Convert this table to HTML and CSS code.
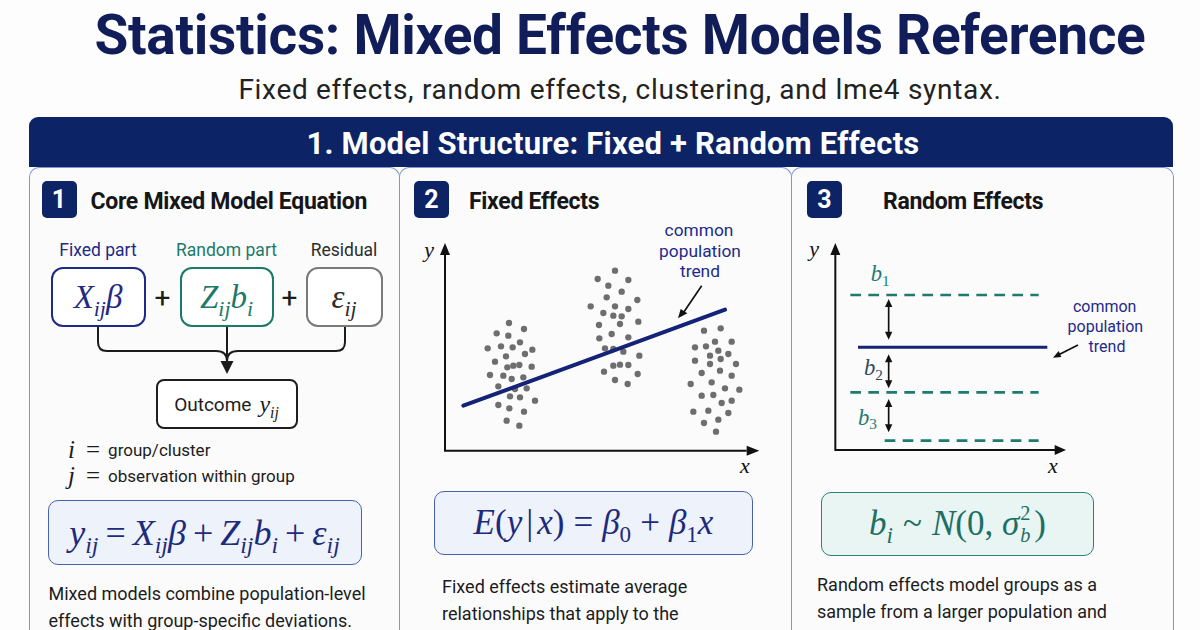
FILE: index.html
```html
<!DOCTYPE html>
<html lang="en">
<head>
<meta charset="utf-8">
<title>Statistics: Mixed Effects Models Reference</title>
<link rel="stylesheet" href="styles.css">
</head>
<body>
<header class="page-head">
  <h1 class="page-title">Statistics: Mixed Effects Models Reference</h1>
  <p class="page-sub">Fixed effects, random effects, clustering, and lme4 syntax.</p>
</header>

<section class="section">
  <div class="section-head">1. Model Structure: Fixed + Random Effects</div>
  <div class="panels">

    <!-- Panel 1 -->
    <div class="panel p1">
      <div class="panel-title"><span class="badge">1</span><span class="ptext">Core Mixed Model Equation</span></div>
      <div class="parts labels">
        <span class="lab lab-fixed">Fixed part</span>
        <span></span>
        <span class="lab lab-random">Random part</span>
        <span></span>
        <span class="lab lab-resid">Residual</span>
      </div>
      <div class="parts boxes">
        <div class="pbox pbox-fixed"><span class="m">X<sub>ij</sub>β</span></div>
        <span class="plus">+</span>
        <div class="pbox pbox-random"><span class="m">Z<sub>ij</sub>b<sub>i</sub></span></div>
        <span class="plus">+</span>
        <div class="pbox pbox-resid"><span class="m">ε<sub>ij</sub></span></div>
      </div>
      <svg class="connect" width="368" height="52" viewBox="0 0 368 52">
        <path d="M68 0 V15 Q68 24 77 24 H186 Q197 24 197 34" fill="none" stroke="#1b1b1b" stroke-width="2"/>
        <path d="M315 0 V15 Q315 24 306 24 H208 Q197 24 197 34" fill="none" stroke="#1b1b1b" stroke-width="2"/>
        <path d="M197 0 V38" fill="none" stroke="#1b1b1b" stroke-width="2"/>
        <polygon points="190.5,34 203.5,34 197,47" fill="#1b1b1b"/>
      </svg>
      <div class="outcome">Outcome <span class="m">y<sub>ij</sub></span></div>
      <div class="defs">
        <div class="def"><span class="m dvar">i</span><span class="eq">=</span>group/cluster</div>
        <div class="def"><span class="m dvar">j</span><span class="eq">=</span>observation within group</div>
      </div>
      <div class="eqbox eq-navy eq1">
        <span class="m">y<sub>ij</sub></span><span class="op">=</span><span class="m">X<sub>ij</sub>β</span><span class="op">+</span><span class="m">Z<sub>ij</sub>b<sub>i</sub></span><span class="op">+</span><span class="m">ε<sub>ij</sub></span>
      </div>
      <p class="note note1">Mixed models combine population-level effects with group-specific deviations.</p>
    </div>

    <!-- Panel 2 -->
    <div class="panel p2">
      <div class="panel-title"><span class="badge">2</span><span class="ptext">Fixed Effects</span></div>
      <svg class="chart" width="380" height="270" viewBox="0 0 1140 810">
        <g fill="#6e6e6e">
          <circle cx="327" cy="312" r="9.5"/><circle cx="290" cy="343" r="9.5"/><circle cx="325" cy="350" r="9.5"/><circle cx="372" cy="330" r="9.5"/>
          <circle cx="263" cy="388" r="9.5"/><circle cx="303" cy="382" r="9.5"/><circle cx="338" cy="385" r="9.5"/><circle cx="360" cy="370" r="9.5"/>
          <circle cx="397" cy="392" r="9.5"/><circle cx="375" cy="405" r="9.5"/><circle cx="285" cy="428" r="9.5"/><circle cx="318" cy="412" r="9.5"/>
          <circle cx="340" cy="440" r="9.5"/><circle cx="358" cy="438" r="9.5"/><circle cx="395" cy="443" r="9.5"/><circle cx="270" cy="468" r="9.5"/>
          <circle cx="310" cy="470" r="9.5"/><circle cx="335" cy="480" r="9.5"/><circle cx="370" cy="475" r="9.5"/><circle cx="295" cy="502" r="9.5"/>
          <circle cx="345" cy="510" r="9.5"/><circle cx="380" cy="508" r="9.5"/><circle cx="330" cy="532" r="9.5"/><circle cx="360" cy="535" r="9.5"/>
          <circle cx="295" cy="558" r="9.5"/><circle cx="328" cy="568" r="9.5"/><circle cx="372" cy="578" r="9.5"/><circle cx="405" cy="545" r="9.5"/>
          <circle cx="320" cy="605" r="9.5"/><circle cx="358" cy="620" r="9.5"/><circle cx="322" cy="445" r="9.5"/>

          <circle cx="645" cy="155" r="9.5"/><circle cx="593" cy="180" r="9.5"/><circle cx="685" cy="183" r="9.5"/><circle cx="625" cy="200" r="9.5"/>
          <circle cx="665" cy="218" r="9.5"/><circle cx="620" cy="235" r="9.5"/><circle cx="712" cy="243" r="9.5"/><circle cx="572" cy="262" r="9.5"/>
          <circle cx="645" cy="262" r="9.5"/><circle cx="685" cy="270" r="9.5"/><circle cx="610" cy="282" r="9.5"/><circle cx="640" cy="290" r="9.5"/>
          <circle cx="665" cy="292" r="9.5"/><circle cx="597" cy="318" r="9.5"/><circle cx="660" cy="315" r="9.5"/><circle cx="715" cy="308" r="9.5"/>
          <circle cx="598" cy="358" r="9.5"/><circle cx="635" cy="345" r="9.5"/><circle cx="685" cy="355" r="9.5"/><circle cx="615" cy="388" r="9.5"/>
          <circle cx="640" cy="390" r="9.5"/><circle cx="670" cy="398" r="9.5"/><circle cx="718" cy="410" r="9.5"/><circle cx="640" cy="440" r="9.5"/>
          <circle cx="660" cy="437" r="9.5"/><circle cx="685" cy="438" r="9.5"/><circle cx="612" cy="458" r="9.5"/><circle cx="713" cy="465" r="9.5"/>
          <circle cx="645" cy="483" r="9.5"/><circle cx="683" cy="495" r="9.5"/>

          <circle cx="912" cy="335" r="9.5"/><circle cx="962" cy="328" r="9.5"/><circle cx="945" cy="368" r="9.5"/><circle cx="995" cy="368" r="9.5"/>
          <circle cx="885" cy="385" r="9.5"/><circle cx="918" cy="382" r="9.5"/><circle cx="955" cy="395" r="9.5"/><circle cx="985" cy="405" r="9.5"/>
          <circle cx="885" cy="425" r="9.5"/><circle cx="930" cy="410" r="9.5"/><circle cx="930" cy="435" r="9.5"/><circle cx="962" cy="420" r="9.5"/>
          <circle cx="1008" cy="435" r="9.5"/><circle cx="905" cy="462" r="9.5"/><circle cx="960" cy="455" r="9.5"/><circle cx="995" cy="470" r="9.5"/>
          <circle cx="872" cy="495" r="9.5"/><circle cx="935" cy="490" r="9.5"/><circle cx="975" cy="508" r="9.5"/><circle cx="1018" cy="512" r="9.5"/>
          <circle cx="905" cy="530" r="9.5"/><circle cx="940" cy="528" r="9.5"/><circle cx="995" cy="545" r="9.5"/><circle cx="965" cy="552" r="9.5"/>
          <circle cx="880" cy="578" r="9.5"/><circle cx="925" cy="575" r="9.5"/><circle cx="985" cy="582" r="9.5"/><circle cx="912" cy="612" r="9.5"/>
          <circle cx="955" cy="602" r="9.5"/><circle cx="948" cy="638" r="9.5"/>
        </g>
        <line x1="190" y1="560" x2="975" y2="272" stroke="#142277" stroke-width="12" stroke-linecap="round"/>
        <path d="M135 105 V695 H1040" fill="none" stroke="#111" stroke-width="6"/>
        <polygon points="120,108 150,108 135,72" fill="#111"/>
        <polygon points="1040,680 1040,710 1078,695" fill="#111"/>
        <text x="73" y="115" class="axl">y</text>
        <text x="1020" y="762" class="axl">x</text>
        <text class="cpt cpt2" x="897" y="52">common</text>
        <text class="cpt cpt2" x="900" y="114">population</text>
        <text class="cpt cpt2" x="900" y="174">trend</text>
        <line x1="905" y1="200" x2="848" y2="284" stroke="#111" stroke-width="5"/>
        <polygon points="834,298 842,270 862,283" fill="#111"/>
      </svg>
      <div class="eqbox eq-navy eq2">
        <span class="m">E</span><span class="up">(</span><span class="m">y</span><span class="up bar">|</span><span class="m">x</span><span class="up">)</span><span class="op">=</span><span class="m">β<sub class="up">0</sub></span><span class="op">+</span><span class="m">β<sub class="up">1</sub>x</span>
      </div>
      <p class="note note2">Fixed effects estimate average relationships that apply to the whole population.</p>
    </div>

    <!-- Panel 3 -->
    <div class="panel p3">
      <div class="panel-title"><span class="badge">3</span><span class="ptext">Random Effects</span></div>
      <svg class="chart" width="380" height="270" viewBox="0 0 1140 810">
        <path d="M130 105 V693 H790" fill="none" stroke="#111" stroke-width="6"/>
        <polygon points="115,108 145,108 130,72" fill="#111"/>
        <polygon points="788,678 788,708 822,693" fill="#111"/>
        <text x="52" y="112" class="axl">y</text>
        <text x="768" y="762" class="axl">x</text>
        <g stroke="#1f7a70" stroke-width="8" stroke-dasharray="32 22" fill="none">
          <line x1="175" y1="228" x2="740" y2="228"/>
          <line x1="175" y1="520" x2="740" y2="520"/>
          <line x1="278" y1="665" x2="740" y2="665"/>
        </g>
        <line x1="198" y1="385" x2="766" y2="385" stroke="#142277" stroke-width="9"/>
        <g stroke="#111" stroke-width="5">
          <line x1="290" y1="262" x2="290" y2="340"/>
          <line x1="290" y1="428" x2="290" y2="486"/>
          <line x1="290" y1="562" x2="290" y2="618"/>
        </g>
        <g fill="#111">
          <polygon points="279,264 301,264 290,240"/><polygon points="279,338 301,338 290,362"/>
          <polygon points="279,430 301,430 290,406"/><polygon points="279,484 301,484 290,508"/>
          <polygon points="279,564 301,564 290,540"/><polygon points="279,616 301,616 290,640"/>
        </g>
        <text class="bl bl-t" x="236" y="186">b<tspan class="bs" dy="14">1</tspan></text>
        <text class="bl bl-d" x="216" y="468">b<tspan class="bs" dy="14">2</tspan></text>
        <text class="bl bl-t" x="198" y="617">b<tspan class="bs" dy="14">3</tspan></text>
        <text class="cpt" x="938" y="278">common</text>
        <text class="cpt" x="940" y="340">population</text>
        <text class="cpt" x="945" y="400">trend</text>
        <line x1="858" y1="378" x2="800" y2="407" stroke="#111" stroke-width="5"/>
        <polygon points="783,416 800,396 808,414" fill="#111"/>
      </svg>
      <div class="eqbox eq-teal eq3">
        <span class="m">b<sub>i</sub></span><span class="op">~</span><span class="m">N</span><span class="up">(0,&nbsp;</span><span class="m sig">σ<span class="supsub"><span class="up">2</span><span>b</span></span></span><span class="up">)</span>
      </div>
      <p class="note note3">Random effects model groups as a sample from a larger population and capture cluster variation.</p>
    </div>

  </div>
</section>
</body>
</html>
```

FILE: styles.css
```css
* { box-sizing: border-box; }

html, body {
  margin: 0;
  padding: 0;
}

body {
  width: 1200px;
  height: 630px;
  overflow: hidden;
  background: #fdfdfd;
  font-family: Roboto, "Liberation Sans", sans-serif;
  color: #1c1c1c;
}

/* ---------- page header ---------- */
.page-head {
  text-align: center;
  padding: 3px 0 0 40px;
}

.page-title {
  margin: 0;
  font-size: 55px;
  line-height: 64px;
  font-weight: 700;
  color: #111d58;
  letter-spacing: -0.3px;
}

.page-sub {
  margin: 7px 0 0;
  font-size: 28px;
  line-height: 32px;
  letter-spacing: 0.7px;
  color: #222;
}

/* ---------- section ---------- */
.section {
  margin: 11px 27px 0 29px;
}

.section-head {
  height: 50px;
  background: #0c2466;
  border-radius: 9px 9px 0 0;
  color: #fff;
  font-size: 31px;
  font-weight: 700;
  letter-spacing: 0.2px;
  display: flex;
  align-items: center;
  justify-content: center;
  padding: 2px 0 0 24px;
}

.panels {
  display: grid;
  grid-template-columns: 371px 392px 382px;
  height: 470px;
}

.panel {
  border: 1.5px solid #7d96cf;
  border-bottom: none;
  border-radius: 10px 10px 0 0;
  background: #fbfbfc;
  min-width: 0;
}

.p2, .p3 { margin-left: -1.5px; }

.panel-title {
  display: flex;
  align-items: center;
  height: 38px;
  margin-top: 12px;
}

.badge {
  width: 35px;
  height: 37px;
  border-radius: 5px;
  background: #0c2466;
  color: #fff;
  font-size: 25px;
  font-weight: 700;
  display: flex;
  align-items: center;
  justify-content: center;
}

.ptext {
  font-size: 23px;
  font-weight: 700;
  color: #161616;
  letter-spacing: -0.3px;
  padding-top: 4px;
}

.p1 .panel-title { padding-left: 11.5px; gap: 14px; }
.p2 .panel-title { padding-left: 14.5px; gap: 20px; }
.p3 .panel-title { padding-left: 15.5px; gap: 41px; }

/* ---------- math ---------- */
.m {
  font-family: "Liberation Serif", "DejaVu Serif", serif;
  font-style: italic;
}

.m sub, .m sup {
  font-size: 0.66em;
  line-height: 0;
}

.up {
  font-family: "Liberation Serif", "DejaVu Serif", serif;
  font-style: normal;
}

/* ---------- panel 1 ---------- */
.parts {
  display: grid;
  grid-template-columns: 95px 34px 94px 32px 77px;
  padding-left: 20.5px;
}

.labels {
  margin-top: 22px;
  height: 20px;
  font-size: 17.5px;
  line-height: 20px;
}

.lab {
  text-align: center;
  white-space: nowrap;
  display: flex;
  justify-content: center;
}

.lab-fixed { color: #1e2a86; }
.lab-random { color: #1b7a6a; }
.lab-resid { color: #2c2c2c; }

.boxes {
  margin-top: 7px;
  height: 60px;
}

.pbox {
  height: 60px;
  border: 2px solid;
  border-radius: 12px;
  display: flex;
  align-items: center;
  justify-content: center;
  background: #fff;
  font-size: 33px;
}

.pbox-fixed { border-color: #1e2a86; color: #1e2a86; }
.pbox-random { border-color: #1b7a6a; color: #1b7a6a; }
.pbox-resid { border-color: #7a7a7a; color: #2c2c2c; }

.plus {
  display: flex;
  align-items: center;
  justify-content: center;
  font-size: 28px;
  color: #1c1c1c;
}

.connect {
  display: block;
}

.outcome {
  margin-left: 125.5px;
  width: 142px;
  height: 50px;
  border: 2px solid #1e1e1e;
  border-radius: 8px;
  background: #fff;
  display: flex;
  align-items: center;
  justify-content: center;
  gap: 8px;
  font-size: 19px;
}

.outcome .m { font-size: 24px; }

.defs {
  margin-top: 8px;
  padding-left: 38px;
}

.def {
  height: 26px;
  display: flex;
  align-items: center;
  font-size: 17px;
}

.dvar {
  font-size: 25px;
  width: 12px;
}

.eq {
  font-family: "Liberation Serif", serif;
  font-size: 25px;
  margin: 0 8px 0 6px;
}

.eqbox {
  display: flex;
  align-items: center;
  justify-content: center;
  border-radius: 10px;
  border: 1.5px solid;
  white-space: nowrap;
}

.eq-navy {
  background: #eef2fb;
  border-color: #4763b0;
  color: #1e2a7c;
}

.eq-teal {
  background: #e9f5f3;
  border-color: #2f7f7a;
  color: #1c6f66;
}

.op {
  font-family: "Liberation Serif", serif;
  margin: 0 8px;
}

.eq1 {
  margin: 11px 0 0 17.5px;
  width: 314px;
  height: 65px;
  font-size: 36px;
}

.eq1 .op { margin: 0 7px; }

.note {
  margin: 0;
  font-size: 18px;
  line-height: 27px;
  color: #1c1c1c;
}

.note1 { margin: 14.5px 0 0 18.5px; width: 340px; }

/* ---------- charts ---------- */
.chart {
  display: block;
  margin-top: 1px;
}

.axl {
  font-family: "Liberation Serif", serif;
  font-style: italic;
  font-size: 66px;
  fill: #111;
}

.cpt {
  font-family: Roboto, "Liberation Sans", sans-serif;
  font-size: 48px;
  fill: #1e2a8a;
  text-anchor: middle;
}

.cpt2 { font-size: 52px; }

.bl {
  font-family: "Liberation Serif", serif;
  font-style: italic;
  font-size: 68px;
}

.bs { font-size: 46px; font-style: normal; }
.bl-t { fill: #1f7a70; }
.bl-d { fill: #2f4b5e; }

/* ---------- panel 2 ---------- */
.eq2 {
  margin: 2px 0 0 34.5px;
  width: 319px;
  height: 64px;
  font-size: 35px;
}

.eq2 .op { margin: 0 9px; }
.bar { margin: 0 4px; }

.note2 { margin: 17.5px 0 0 42.5px; width: 262px; }

/* ---------- panel 3 ---------- */
.eq3 {
  margin: 3px 0 0 29.5px;
  width: 273px;
  height: 64px;
  font-size: 35px;
}

.eq3 .op { margin: 0 10px; }

.sig { display: inline-flex; align-items: center; }

.supsub {
  display: inline-flex;
  flex-direction: column;
  font-size: 0.58em;
  line-height: 1;
  gap: 1px;
  margin: 0 4px 0 1px;
}

.note3 { margin: 14.5px 0 0 25.5px; width: 300px; }
```
